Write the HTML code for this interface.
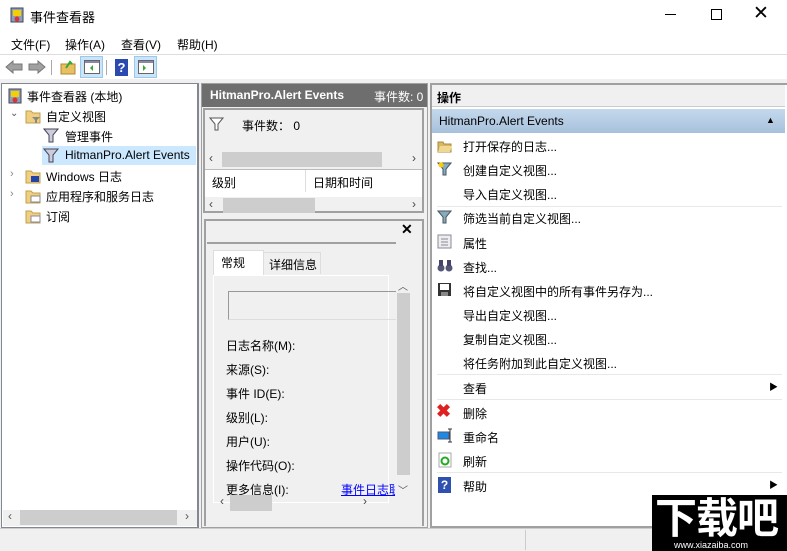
<!DOCTYPE html>
<html><head><meta charset="utf-8"><style>
*{margin:0;padding:0;box-sizing:border-box}
body{width:787px;height:551px;overflow:hidden;background:#f0f0f0;font-family:"Liberation Sans","Noto Sans CJK SC",sans-serif;font-size:12px;color:#000;position:relative}
.a{position:absolute;white-space:nowrap}
.sb{background:#cdcdcd}
</style></head><body>
<!-- title bar -->
<div class="a" style="left:0;top:0;width:787px;height:31px;background:#fff"></div>
<svg class="a" style="left:9px;top:7px" width="16" height="16"><rect x="2" y="1" width="12" height="14" fill="#8aa0c0" stroke="#445"/><rect x="4" y="3" width="8" height="6" fill="#f5d000"/><circle cx="8" cy="12" r="2.5" fill="#d33"/></svg>
<div class="a" style="left:30px;top:7px;font-size:13px">事件查看器</div>
<div class="a" style="left:665px;top:14px;width:11px;height:1px;background:#000"></div>
<div class="a" style="left:711px;top:9px;width:11px;height:11px;border:1px solid #000"></div>
<div class="a" style="left:753px;top:2px;font-size:19px;font-weight:300">✕</div>
<!-- menu -->
<div class="a" style="left:0;top:31px;width:787px;height:24px;background:#fff;border-bottom:1px solid #ddd"></div>
<div class="a" style="left:11px;top:36px;font-size:12px">文件(F)</div>
<div class="a" style="left:65px;top:36px">操作(A)</div>
<div class="a" style="left:121px;top:36px">查看(V)</div>
<div class="a" style="left:177px;top:36px">帮助(H)</div>
<!-- toolbar -->
<div class="a" style="left:0;top:55px;width:787px;height:24px;background:#fff"></div>
<svg class="a" style="left:5px;top:60px" width="18" height="14"><path d="M1 7 L8 1 V4 H17 V10 H8 V13 Z" fill="#a0a0a0" stroke="#777"/></svg>
<svg class="a" style="left:28px;top:60px" width="18" height="14"><path d="M17 7 L10 1 V4 H1 V10 H10 V13 Z" fill="#a0a0a0" stroke="#777"/></svg>
<div class="a" style="left:51px;top:60px;width:1px;height:15px;background:#aaa"></div>
<svg class="a" style="left:60px;top:59px" width="16" height="16"><rect x="1" y="5" width="14" height="10" fill="#e8c060" stroke="#b08830"/><path d="M6 9 L10 3 L12 5" stroke="#3a3" stroke-width="2" fill="none"/></svg>
<div class="a" style="left:80px;top:56px;width:23px;height:22px;background:#cce4f7;border:1px solid #99c9ef"></div>
<svg class="a" style="left:84px;top:60px" width="16" height="14"><rect x="0.5" y="0.5" width="15" height="13" fill="#fff" stroke="#666"/><rect x="1" y="1" width="14" height="2" fill="#88a"/><path d="M9 5 L6 8 L9 11Z" fill="#3a3"/></svg>
<div class="a" style="left:106px;top:60px;width:1px;height:15px;background:#aaa"></div>
<div class="a" style="left:115px;top:59px;width:13px;height:17px;background:#2a4ab0;color:#fff;font-weight:bold;font-size:13px;text-align:center;line-height:17px">?</div>
<div class="a" style="left:134px;top:56px;width:23px;height:22px;background:#cce4f7;border:1px solid #99c9ef"></div>
<svg class="a" style="left:138px;top:60px" width="16" height="14"><rect x="0.5" y="0.5" width="15" height="13" fill="#fff" stroke="#666"/><rect x="1" y="1" width="14" height="2" fill="#88a"/><path d="M5 5 L8 8 L5 11Z" fill="#3a3"/></svg>
<!-- left pane -->
<div class="a" style="left:1px;top:83px;width:198px;height:445px;background:#fff;border:1px solid #828790;border-right:2px solid #828790"></div>
<svg class="a" style="left:7px;top:88px" width="16" height="16"><rect x="2" y="1" width="12" height="14" fill="#8aa0c0" stroke="#445"/><rect x="4" y="3" width="8" height="6" fill="#f5d000"/><circle cx="8" cy="12" r="2.5" fill="#d33"/></svg>
<div class="a" style="left:27px;top:88px">事件查看器 (本地)</div>
<div class="a" style="left:10px;top:108px;color:#555;font-size:10px">⌄</div>
<svg class="a" style="left:25px;top:108px" width="16" height="16"><path d="M1 3h5l2 2h7v10H1z" fill="#f0d080" stroke="#c0a050"/><path d="M7 9h8l-3 3v3h-2v-3z" fill="#888"/></svg>
<div class="a" style="left:46px;top:108px">自定义视图</div>
<svg class="a" style="left:43px;top:128px" width="16" height="15"><path d="M1 1h14l-5 6v7h-4v-7z" fill="#ccd" stroke="#445"/></svg>
<div class="a" style="left:65px;top:128px">管理事件</div>
<div class="a" style="left:42px;top:146px;width:154px;height:19px;background:#cce8ff"></div>
<svg class="a" style="left:43px;top:148px" width="16" height="15"><path d="M1 1h14l-5 6v7h-4v-7z" fill="#ccd" stroke="#445"/></svg>
<div class="a" style="left:65px;top:148px">HitmanPro.Alert Events</div>
<div class="a" style="left:10px;top:168px;color:#888;font-size:11px">›</div>
<svg class="a" style="left:25px;top:168px" width="16" height="16"><path d="M1 3h5l2 2h7v10H1z" fill="#f0d080" stroke="#c0a050"/><rect x="6" y="8" width="8" height="6" fill="#2244aa"/></svg>
<div class="a" style="left:46px;top:168px">Windows 日志</div>
<div class="a" style="left:10px;top:188px;color:#888;font-size:11px">›</div>
<svg class="a" style="left:25px;top:188px" width="16" height="16"><path d="M1 3h5l2 2h7v10H1z" fill="#f0d080" stroke="#c0a050"/><rect x="6" y="8" width="9" height="6" fill="#fff" stroke="#888"/></svg>
<div class="a" style="left:46px;top:188px">应用程序和服务日志</div>
<svg class="a" style="left:25px;top:208px" width="16" height="16"><path d="M1 3h5l2 2h7v10H1z" fill="#f0d080" stroke="#c0a050"/><rect x="6" y="8" width="9" height="6" fill="#fff" stroke="#88a"/></svg>
<div class="a" style="left:46px;top:208px">订阅</div>
<div class="a" style="left:3px;top:510px;width:194px;height:16px;background:#f0f0f0"></div>
<div class="a sb" style="left:20px;top:510px;width:157px;height:15px"></div>
<div class="a" style="left:8px;top:509px;color:#555">‹</div>
<div class="a" style="left:185px;top:509px;color:#555">›</div>
<!-- middle pane -->
<div class="a" style="left:201px;top:83px;width:227px;height:445px;background:#f0f0f0;border:1px solid #a0a0a0"></div>
<div class="a" style="left:202px;top:84px;width:225px;height:23px;background:#6e6e6e"></div>
<div class="a" style="left:210px;top:88px;color:#fff;font-weight:bold;font-size:12px">HitmanPro.Alert Events</div>
<div class="a" style="left:374px;top:88px;color:#fff">事件数: 0</div>
<div class="a" style="left:203px;top:108px;width:221px;height:105px;background:#f0f0f0;border:2px solid #a0a0a0"></div>
<svg class="a" style="left:209px;top:117px" width="15" height="14"><path d="M1 1h13l-5 6v6h-3v-6z" fill="#fff" stroke="#555"/></svg>
<div class="a" style="left:242px;top:117px">事件数： 0</div>
<div class="a" style="left:205px;top:151px;width:217px;height:17px;background:#f0f0f0"></div>
<div class="a sb" style="left:222px;top:152px;width:160px;height:15px"></div>
<div class="a" style="left:209px;top:151px;color:#444">‹</div>
<div class="a" style="left:412px;top:151px;color:#444">›</div>
<div class="a" style="left:205px;top:169px;width:217px;height:28px;background:#fff;border-top:1px solid #bbb"></div>
<div class="a" style="left:305px;top:170px;width:1px;height:22px;background:#ddd"></div>
<div class="a" style="left:212px;top:174px">级别</div>
<div class="a" style="left:313px;top:174px">日期和时间</div>
<div class="a sb" style="left:223px;top:198px;width:92px;height:15px"></div>
<div class="a" style="left:209px;top:197px;color:#444">‹</div>
<div class="a" style="left:412px;top:197px;color:#444">›</div>
<div class="a" style="left:204px;top:219px;width:220px;height:307px;border:2px solid #a0a0a0;border-bottom:none"></div>
<div class="a" style="left:401px;top:221px;font-weight:bold;font-size:14px">✕</div>
<div class="a" style="left:207px;top:242px;width:189px;height:2px;background:#a0a0a0"></div>
<div class="a" style="left:213px;top:250px;width:51px;height:26px;background:#fff;border:1px solid #ddd;border-bottom:none"></div>
<div class="a" style="left:221px;top:254px">常规</div>
<div class="a" style="left:263px;top:252px;width:58px;height:22px;border:1px solid #ddd;border-bottom:none"></div>
<div class="a" style="left:269px;top:256px">详细信息</div>
<div class="a" style="left:213px;top:275px;width:176px;height:228px;border:1px solid #fff"></div>
<div class="a" style="left:228px;top:291px;width:170px;height:29px;border:1px solid #999;border-right:none;border-bottom-color:#ddd"></div>
<div class="a" style="left:396px;top:276px;width:16px;height:208px;background:#f0f0f0"></div>
<div class="a sb" style="left:397px;top:293px;width:13px;height:182px"></div>
<div class="a" style="left:398px;top:278px;color:#555;font-size:10px">︿</div>
<div class="a" style="left:398px;top:482px;color:#555;font-size:10px">﹀</div>
<div class="a" style="left:226px;top:337px">日志名称(M):</div>
<div class="a" style="left:226px;top:361px">来源(S):</div>
<div class="a" style="left:226px;top:385px">事件 ID(E):</div>
<div class="a" style="left:226px;top:409px">级别(L):</div>
<div class="a" style="left:226px;top:433px">用户(U):</div>
<div class="a" style="left:226px;top:457px">操作代码(O):</div>
<div class="a" style="left:226px;top:481px">更多信息(I):</div>
<div class="a" style="left:341px;top:481px;width:54px;overflow:hidden;color:#00f;text-decoration:underline">事件日志联机帮助</div>
<div class="a sb" style="left:230px;top:495px;width:42px;height:16px"></div>
<div class="a" style="left:220px;top:494px;color:#444">‹</div>
<div class="a" style="left:363px;top:494px;color:#444">›</div>
<!-- right pane -->
<div class="a" style="left:430px;top:83px;width:357px;height:445px;background:#fff;border:2px solid #a0a0a0;border-right:none"></div>
<div class="a" style="left:432px;top:85px;width:353px;height:22px;background:#f0f0f0;border-bottom:1px solid #ccc"></div>
<div class="a" style="left:437px;top:89px;font-weight:bold">操作</div>
<div class="a" style="left:432px;top:109px;width:353px;height:24px;background:linear-gradient(#c4d8ec,#a7c1dc)"></div>
<div class="a" style="left:439px;top:114px">HitmanPro.Alert Events</div>
<div class="a" style="left:766px;top:115px;font-size:9px">▲</div>
<svg class="a" style="left:437px;top:139px" width="16" height="14"><path d="M1 3h5l1 2h7v8H1z" fill="#d8b860" stroke="#a88840"/><path d="M3 7h12l-2 6H1z" fill="#f0d890"/></svg>
<div class="a" style="left:463px;top:138px">打开保存的日志...</div>
<svg class="a" style="left:437px;top:162px" width="15" height="14"><path d="M1 1h13l-5 6v6h-3v-6z" fill="#8ab" stroke="#456"/><circle cx="4" cy="3" r="2.5" fill="#fc0"/></svg>
<div class="a" style="left:463px;top:162px">创建自定义视图...</div>
<div class="a" style="left:463px;top:186px">导入自定义视图...</div>
<div class="a" style="left:437px;top:206px;width:345px;height:1px;background:#e8e8e8"></div>
<svg class="a" style="left:437px;top:210px" width="15" height="14"><path d="M1 1h13l-5 6v6h-3v-6z" fill="#8ab" stroke="#456"/></svg>
<div class="a" style="left:463px;top:210px">筛选当前自定义视图...</div>
<svg class="a" style="left:437px;top:234px" width="15" height="15"><rect x="1" y="1" width="13" height="13" fill="#eee" stroke="#889"/><path d="M4 5h7M4 8h7M4 11h7" stroke="#889"/></svg>
<div class="a" style="left:463px;top:235px">属性</div>
<svg class="a" style="left:437px;top:258px" width="16" height="15"><circle cx="4" cy="10" r="3.5" fill="#557"/><circle cx="12" cy="10" r="3.5" fill="#557"/><rect x="2" y="2" width="4" height="6" fill="#446"/><rect x="10" y="2" width="4" height="6" fill="#446"/></svg>
<div class="a" style="left:463px;top:259px">查找...</div>
<svg class="a" style="left:437px;top:282px" width="15" height="15"><rect x="1" y="1" width="13" height="13" fill="#333"/><rect x="3" y="2" width="9" height="6" fill="#fff"/><rect x="4" y="10" width="7" height="4" fill="#888"/></svg>
<div class="a" style="left:463px;top:283px">将自定义视图中的所有事件另存为...</div>
<div class="a" style="left:463px;top:307px">导出自定义视图...</div>
<div class="a" style="left:463px;top:331px">复制自定义视图...</div>
<div class="a" style="left:463px;top:355px">将任务附加到此自定义视图...</div>
<div class="a" style="left:437px;top:374px;width:345px;height:1px;background:#e8e8e8"></div>
<div class="a" style="left:463px;top:380px">查看</div>
<div class="a" style="left:769px;top:380px;font-size:9px">▶</div>
<div class="a" style="left:437px;top:399px;width:345px;height:1px;background:#e8e8e8"></div>
<div class="a" style="left:436px;top:401px;color:#e02020;font-size:18px;font-weight:bold">✖</div>
<div class="a" style="left:463px;top:405px">删除</div>
<svg class="a" style="left:437px;top:428px" width="16" height="15"><rect x="1" y="4" width="11" height="7" fill="#1e88e5" stroke="#557"/><path d="M13 1v13M11 1h4M11 14h4" stroke="#333"/></svg>
<div class="a" style="left:463px;top:429px">重命名</div>
<svg class="a" style="left:438px;top:452px" width="14" height="16"><rect x="1" y="1" width="12" height="14" fill="#fff" stroke="#aaa"/><circle cx="7" cy="9" r="3.5" fill="none" stroke="#2a2" stroke-width="2"/></svg>
<div class="a" style="left:463px;top:453px">刷新</div>
<div class="a" style="left:437px;top:472px;width:345px;height:1px;background:#e8e8e8"></div>
<div class="a" style="left:438px;top:477px;width:13px;height:16px;background:#3050b0;color:#fff;font-weight:bold;text-align:center;line-height:16px">?</div>
<div class="a" style="left:463px;top:478px">帮助</div>
<div class="a" style="left:769px;top:478px;font-size:9px">▶</div>
<!-- status bar -->
<div class="a" style="left:0;top:528px;width:787px;height:23px;background:#f0f0f0;border-top:1px solid #ccc"></div>
<div class="a" style="left:525px;top:530px;width:1px;height:20px;background:#ccc"></div>
<!-- watermark -->
<div class="a" style="left:652px;top:495px;width:135px;height:56px;background:#000"></div>
<div class="a" style="left:655px;top:491px;color:#fff;font-size:42px;line-height:50px;font-weight:bold;letter-spacing:-1px;font-family:'Noto Sans CJK SC',sans-serif">下载吧</div>
<div class="a" style="left:672px;top:540px;color:#fff;font-size:9px;line-height:11px;background:#000;padding:0 2px">www.xiazaiba.com</div>
</body></html>
